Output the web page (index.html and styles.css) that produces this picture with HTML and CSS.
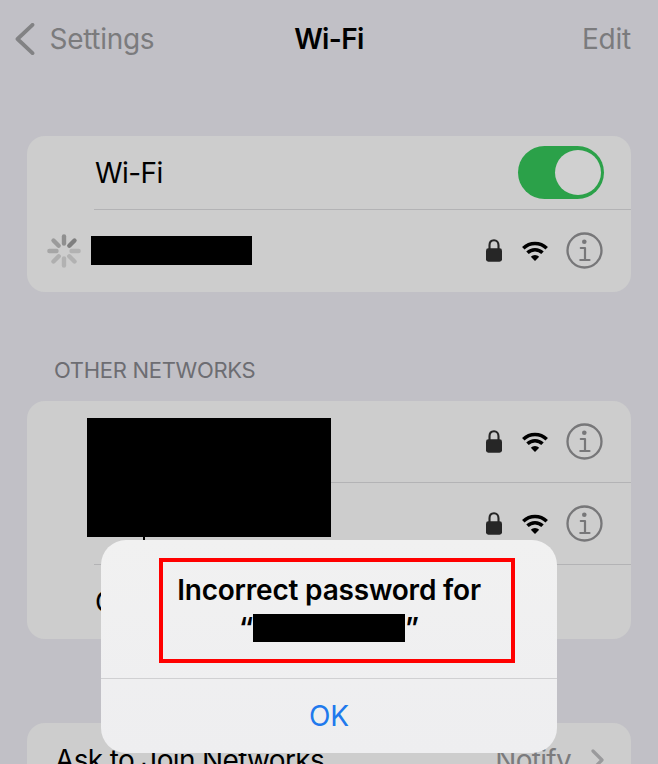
FILE: index.html
```
<!DOCTYPE html>
<html lang="en">
<head>
<meta charset="utf-8">
<title>Wi-Fi</title>
<link rel="stylesheet" href="styles.css">
</head>
<body>
<svg class="defs" aria-hidden="true">
  <symbol id="lock" viewBox="0 0 16 23">
    <path d="M3.5 11V6.3C3.5 3.2 5.3 1.3 8 1.3s4.5 1.9 4.5 5V11" fill="none" stroke="#262626" stroke-width="2.1"/>
    <rect x="0" y="9.3" width="16" height="13.4" rx="2.4" fill="#262626"/>
  </symbol>
  <symbol id="wifi" viewBox="0 0 26 20">
    <path d="M1.3 7.2a16.6 16.6 0 0 1 23.4 0M5.5 11.8a10.7 10.7 0 0 1 15 0" fill="none" stroke="#000" stroke-width="3.5"/>
    <path d="M13 20l-4.2-4.2a5.9 5.9 0 0 1 8.4 0z" fill="#000"/>
  </symbol>
  <symbol id="info" viewBox="0 0 37 37">
    <circle cx="18.5" cy="18.5" r="17" fill="none" stroke="#777779" stroke-width="2.3"/>
    <circle cx="18.3" cy="9.8" r="2.3" fill="#777779"/>
    <path d="M14.8 16h4.2v12M14.3 28h9.2" fill="none" stroke="#777779" stroke-width="2.2" stroke-linecap="round" stroke-linejoin="round"/>
  </symbol>
</svg>

<div class="screen">
  <header class="nav">
    <div class="back">
      <svg class="back-icon" viewBox="0 0 20 32"><path d="M17.5 1.8L2.5 16l15 14.2" fill="none" stroke="#828284" stroke-width="3.8" stroke-linecap="round" stroke-linejoin="round"/></svg>
      <span class="back-label">Settings</span>
    </div>
    <h1 class="title">Wi-Fi</h1>
    <span class="edit">Edit</span>
  </header>

  <section class="card current">
    <div class="row toggle-row">
      <span class="label wifi-label">Wi-Fi</span>
      <span class="switch"><span class="knob"></span></span>
    </div>
    <div class="row joining">
      <svg class="spinner" viewBox="-17 -17 34 34" stroke-width="4.4" stroke-linecap="round">
        <path d="M0-7.5V-14.6" stroke="#8f8f8f"/>
        <path d="M5.3-5.3L10.5-10.5" stroke="#7f7f7f"/>
        <path d="M7.5 0H14.6" stroke="#b2b2b2"/>
        <path d="M5.3 5.3L10.5 10.5" stroke="#b2b2b2"/>
        <path d="M0 7.5V14.6" stroke="#b2b2b2"/>
        <path d="M-5.3 5.3L-10.5 10.5" stroke="#afafaf"/>
        <path d="M-7.5 0H-14.6" stroke="#a6a6a6"/>
        <path d="M-5.3-5.3L-10.5-10.5" stroke="#9b9b9b"/>
      </svg>
      <span class="redacted ssid"></span>
      <span class="icons"><svg class="lock"><use href="#lock"/></svg><svg class="wifi"><use href="#wifi"/></svg><svg class="info"><use href="#info"/></svg></span>
    </div>
  </section>

  <h2 class="section-title">OTHER NETWORKS</h2>

  <section class="card others">
    <div class="row network"><span class="icons"><svg class="lock"><use href="#lock"/></svg><svg class="wifi"><use href="#wifi"/></svg><svg class="info"><use href="#info"/></svg></span></div>
    <div class="row network"><span class="icons"><svg class="lock"><use href="#lock"/></svg><svg class="wifi"><use href="#wifi"/></svg><svg class="info"><use href="#info"/></svg></span></div>
    <div class="row other"><span class="label">Other...</span></div>
    <span class="redacted names"></span>
    <span class="descender"></span>
  </section>

  <section class="card ask">
    <div class="row ask-row">
      <span class="ask-label">Ask to Join Networks</span>
      <span class="value">Notify</span>
      <svg class="chevron" viewBox="0 0 13 22"><path d="M2 2l9 9-9 9" fill="none" stroke="#9a9a9c" stroke-width="3.2" stroke-linecap="round" stroke-linejoin="round"/></svg>
    </div>
  </section>

  <div class="alert" role="alertdialog">
    <div class="alert-body">
      <div class="highlight">
        <div class="message">Incorrect password for</div>
        <div class="message quoted"><span>“</span><span class="redacted name"></span><span>”</span></div>
      </div>
    </div>
    <div class="ok">OK</div>
  </div>
</div>
</body>
</html>
```
FILE: styles.css
```
* { box-sizing: border-box; }
body {
  margin: 0;
  background: #c1c0c6;
  font-family: Inter, "Liberation Sans", sans-serif;
  font-size: 28px;
  color: #000;
}
h1, h2 { margin: 0; }
svg { display: block; flex: none; }
.defs { position: absolute; width: 0; height: 0; }
.screen { position: relative; width: 658px; height: 764px; overflow: hidden; }

.nav {
  display: grid;
  grid-template-columns: 1fr auto 1fr;
  align-items: center;
  height: 78px;
  padding: 0 27px 0 15px;
  color: #7b7b7d;
}
.back { display: flex; align-items: center; gap: 14.5px; }
.back-icon { width: 20px; height: 32px; }
.back-label { letter-spacing: -0.3px; }
.title { font-size: 28px; font-weight: 600; color: #000; letter-spacing: -0.6px; margin-left: 12px; }
.edit { justify-self: end; letter-spacing: -0.2px; }

.card { position: relative; margin: 0 27px; border-radius: 18px; background: #cdcdcd; }
.current { margin-top: 57.5px; }
.row { position: relative; display: flex; align-items: center; }
.row + .row::before {
  content: "";
  position: absolute;
  top: -1px;
  left: 67px;
  right: 0;
  height: 1px;
  background: #b3b3b5;
}
.toggle-row { height: 74.5px; padding: 0 27px 0 68px; justify-content: space-between; }
.wifi-label { letter-spacing: -0.6px; }
.switch { display: flex; justify-content: flex-end; width: 86px; height: 53px; padding: 4px 3px; border-radius: 27px; background: #2ba149; }
.knob { width: 46px; height: 45px; border-radius: 50%; background: #d0d0d0; }
.joining { height: 81.5px; padding: 0 28.5px 0 20px; }
.spinner { width: 34px; height: 34px; }
.redacted { display: block; background: #000; }
.ssid { width: 161px; height: 29px; margin-left: 9.5px; }
.icons { display: flex; align-items: center; margin-left: auto; }
.lock { width: 16px; height: 23px; }
.wifi { width: 26px; height: 20px; margin: 0 18px 0 20px; }
.info { width: 37px; height: 37px; }

.section-title { height: 109.5px; padding: 65px 0 0 54px; font-size: 22px; line-height: 27px; font-weight: 400; letter-spacing: -0.3px; color: #6d6d72; }
.others { height: 238px; }
.network { height: 82px; padding-right: 28.5px; }
.network .icons { margin-top: -1px; }
.other { height: 74px; padding-left: 68px; }
.names { position: absolute; left: 60px; top: 17px; width: 244px; height: 119px; }
.descender { position: absolute; left: 116px; top: 136px; width: 2px; height: 3px; background: #000; }

.ask { margin-top: 83.5px; }
.ask-row { height: 75px; padding: 0 27px 0 28px; }
.ask-label { letter-spacing: -0.65px; }
.value { margin-left: auto; color: #7b7b7d; letter-spacing: -0.7px; }
.chevron { width: 13px; height: 22px; margin-left: 20px; }

.alert {
  position: absolute;
  left: 101px;
  top: 540px;
  width: 456px;
  height: 213px;
  border-radius: 25px;
  background: linear-gradient(#f1f1f1, #eeeef0);
}
.alert-body { height: 139px; padding: 18px 42px 0 58px; border-bottom: 1px solid #d0d0d2; }
.highlight { height: 105px; padding: 9px 16px 0 0; border: 4px solid #f00; }
.message { height: 38px; line-height: 38px; text-align: center; font-weight: 600; white-space: nowrap; letter-spacing: -0.2px; }
.quoted { display: flex; justify-content: center; align-items: center; }
.name { width: 152px; height: 28px; }
.ok { height: 74px; line-height: 75px; text-align: center; color: #2079ed; }
```
